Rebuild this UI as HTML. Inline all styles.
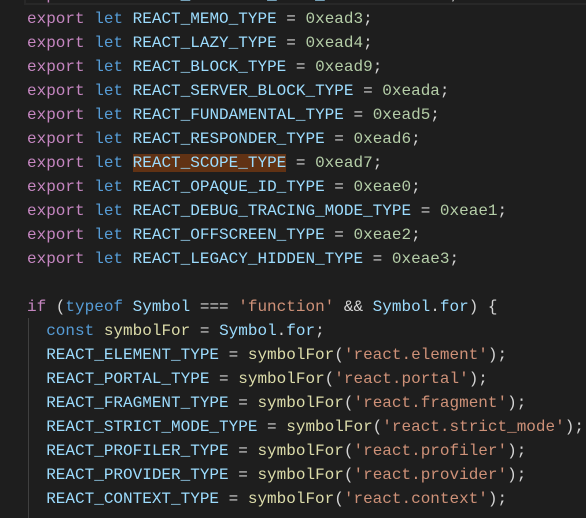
<!DOCTYPE html>
<html><head><style>
html,body{margin:0;padding:0;background:#1e1e1e;width:586px;height:509px;overflow:hidden}
#c{position:absolute;left:27px;top:-17px;font-family:"Liberation Mono",monospace;font-size:16px;line-height:24px;color:#d4d4d4;white-space:pre}
.k{color:#c586c0}.b{color:#569cd6}.v{color:#9cdcfe}.n{color:#b5cea8}.s{color:#ce9178}.f{color:#dcdcaa}
.hl{background:#613214}
#cur{position:absolute;left:24px;top:-19px;width:600px;height:24px;border:2px solid #282828;box-sizing:border-box}
#g{position:absolute;left:28px;top:318px;width:1px;height:200px;background:#404040}
</style></head><body>
<div id="cur"></div>
<div id="g"></div>
<div id="c"><span class="k">export</span> <span class="b">let</span> <span class="v">REACT_SUSPENSE_LIST_TYPE</span> = <span class="n">0xead8</span>;
<span class="k">export</span> <span class="b">let</span> <span class="v">REACT_MEMO_TYPE</span> = <span class="n">0xead3</span>;
<span class="k">export</span> <span class="b">let</span> <span class="v">REACT_LAZY_TYPE</span> = <span class="n">0xead4</span>;
<span class="k">export</span> <span class="b">let</span> <span class="v">REACT_BLOCK_TYPE</span> = <span class="n">0xead9</span>;
<span class="k">export</span> <span class="b">let</span> <span class="v">REACT_SERVER_BLOCK_TYPE</span> = <span class="n">0xeada</span>;
<span class="k">export</span> <span class="b">let</span> <span class="v">REACT_FUNDAMENTAL_TYPE</span> = <span class="n">0xead5</span>;
<span class="k">export</span> <span class="b">let</span> <span class="v">REACT_RESPONDER_TYPE</span> = <span class="n">0xead6</span>;
<span class="k">export</span> <span class="b">let</span> <span class="v hl">REACT_SCOPE_TYPE</span> = <span class="n">0xead7</span>;
<span class="k">export</span> <span class="b">let</span> <span class="v">REACT_OPAQUE_ID_TYPE</span> = <span class="n">0xeae0</span>;
<span class="k">export</span> <span class="b">let</span> <span class="v">REACT_DEBUG_TRACING_MODE_TYPE</span> = <span class="n">0xeae1</span>;
<span class="k">export</span> <span class="b">let</span> <span class="v">REACT_OFFSCREEN_TYPE</span> = <span class="n">0xeae2</span>;
<span class="k">export</span> <span class="b">let</span> <span class="v">REACT_LEGACY_HIDDEN_TYPE</span> = <span class="n">0xeae3</span>;

<span class="k">if</span> (<span class="b">typeof</span> <span class="v">Symbol</span> === <span class="s">'function'</span> &amp;&amp; <span class="v">Symbol</span>.<span class="v">for</span>) {
  <span class="b">const</span> <span class="f">symbolFor</span> = <span class="v">Symbol</span>.<span class="v">for</span>;
  <span class="v">REACT_ELEMENT_TYPE</span> = <span class="f">symbolFor</span>(<span class="s">'react.element'</span>);
  <span class="v">REACT_PORTAL_TYPE</span> = <span class="f">symbolFor</span>(<span class="s">'react.portal'</span>);
  <span class="v">REACT_FRAGMENT_TYPE</span> = <span class="f">symbolFor</span>(<span class="s">'react.fragment'</span>);
  <span class="v">REACT_STRICT_MODE_TYPE</span> = <span class="f">symbolFor</span>(<span class="s">'react.strict_mode'</span>);
  <span class="v">REACT_PROFILER_TYPE</span> = <span class="f">symbolFor</span>(<span class="s">'react.profiler'</span>);
  <span class="v">REACT_PROVIDER_TYPE</span> = <span class="f">symbolFor</span>(<span class="s">'react.provider'</span>);
  <span class="v">REACT_CONTEXT_TYPE</span> = <span class="f">symbolFor</span>(<span class="s">'react.context'</span>);
</div>
</body></html>
